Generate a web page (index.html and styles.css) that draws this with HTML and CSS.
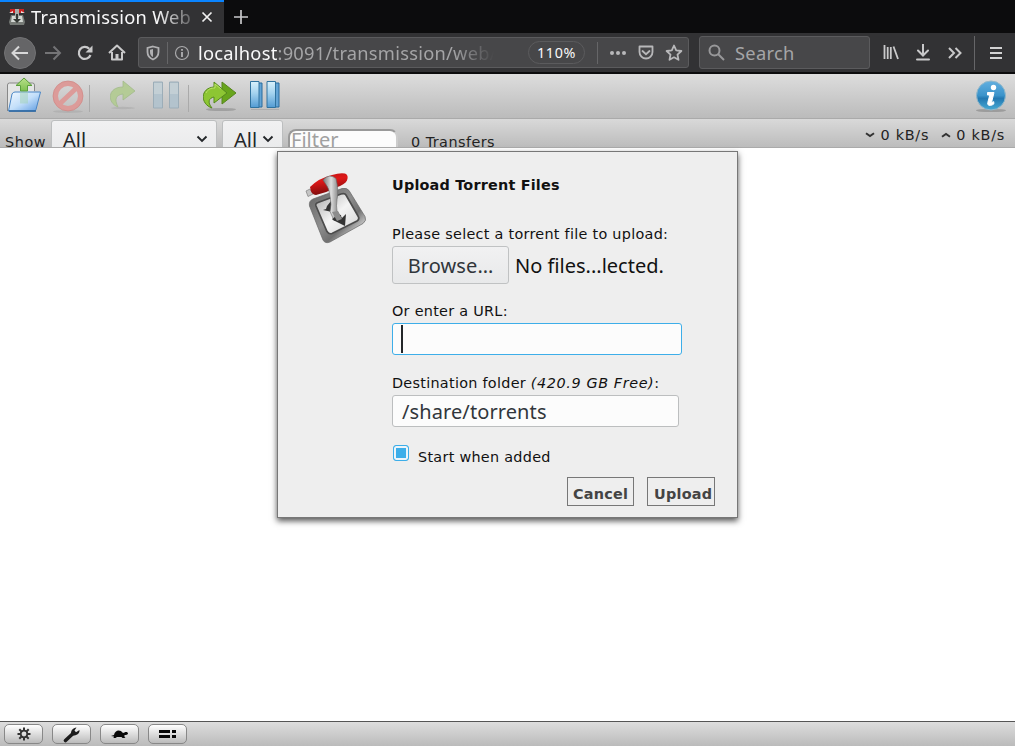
FILE: index.html
```html
<!DOCTYPE html>
<html lang="en">
<head>
<meta charset="utf-8">
<title>Transmission Web Interface</title>
<link rel="stylesheet" href="styles.css">
</head>
<body>
<div class="browser">
  <div class="tabs">
    <div class="tab">
      <svg class="favicon" width="16" height="16" viewBox="0 0 16 16"><path d="M2 6h12l2 7-1 3H1l-1-3z" fill="#777b77"/><path d="M3 7h10l1 6H2z" fill="#d4d8d4"/><path d="M1 0h14v4H1z" fill="#c92222"/><path d="M0 4l4-2v2zM16 4l-4-2v2z" fill="#efe4e0"/><path d="M6 0h4v9H6z" fill="#a9aca9"/><path d="M7 5h2v5h3l-4 4-4-4h3z" fill="#343834"/></svg>
      <span class="tab-title">Transmission Web</span>
      <svg class="tab-close" width="12" height="12" viewBox="0 0 12 12"><path d="M1.500 1.500l9 9M10.500 1.500l-9 9" stroke="#f0f0f0" stroke-width="1.700"/></svg>
    </div>
    <svg class="plus" width="16" height="16" viewBox="0 0 16 16"><path d="M8 1v14M1 8h14" stroke="#c9c9cb" stroke-width="1.700"/></svg>
  </div>
  <div class="nav">
    <div class="back"><svg width="20" height="20" viewBox="0 0 20 20" fill="none" stroke="#d8d8d9" stroke-width="2"><path d="M18 10H3M9 3.500L2.500 10 9 16.500"/></svg></div>
    <svg class="fwd" width="18" height="18" viewBox="0 0 18 18" fill="none" stroke="#747476" stroke-width="2"><path d="M1 9h15M9.500 2.500L16 9l-6.500 6.500"/></svg>
    <svg class="reload" width="16" height="16" viewBox="0 0 16 16"><path d="M12.200 3.800A6 6 0 1 0 13.500 10" fill="none" stroke="#c9c9ca" stroke-width="2.200"/><path d="M15.500 0.500v7h-7z" fill="#c9c9ca"/></svg>
    <svg class="home" width="18" height="17" viewBox="0 0 18 17" fill="none" stroke="#c9c9ca" stroke-width="2"><path d="M1 9l8-7.500L17 9M4 8v7.500h10V8" stroke-linejoin="round"/><path d="M9 15v-5" stroke-width="3"/></svg>
    <div class="urlbar">
      <svg class="shield" width="14" height="16" viewBox="0 0 14 16"><path d="M7 1.500L12.500 3v4c0 3.500-2 6-5.500 7.500C3.500 13 1.500 10.500 1.500 7V3z" fill="none" stroke="#b1b1b3" stroke-width="1.800"/><path d="M7 4v8C5 11 4 9.500 4 7V4.800z" fill="#b1b1b3"/></svg>
      <i class="divider divider-shield"></i>
      <svg class="info-small" width="16" height="16" viewBox="0 0 16 16"><circle cx="8" cy="8" r="6.500" fill="none" stroke="#aaaaac" stroke-width="1.200"/><path d="M8 7v5M8 4v1.800" stroke="#b1b1b3" stroke-width="1.800"/></svg>
      <span class="url"><b>localhost</b>:9091/transmission/web/</span>
      <span class="zoom">110%</span>
      <i class="divider divider-zoom"></i>
      <svg class="dots" width="18" height="6" viewBox="0 0 18 6" fill="#b8b8ba"><circle cx="3" cy="3" r="2"/><circle cx="9" cy="3" r="2"/><circle cx="15" cy="3" r="2"/></svg>
      <svg class="pocket" width="16" height="15" viewBox="0 0 16 15" fill="none" stroke="#b8b8ba" stroke-width="1.800"><path d="M1.500 1.500h13v5.500a6.500 6.500 0 0 1-13 0z" stroke-linejoin="round"/><path d="M4.500 6L8 9.200 11.500 6" stroke-linecap="round"/></svg>
      <svg class="star" width="18" height="17" viewBox="0 0 18 17"><path d="M9 1.500l2.200 4.900 5.200.6-3.900 3.600 1 5.200L9 13.300l-4.500 2.500 1-5.200L1.600 7l5.200-.6z" fill="none" stroke="#b8b8ba" stroke-width="1.800" stroke-linejoin="round"/></svg>
    </div>
    <div class="search">
      <svg width="17" height="17" viewBox="0 0 17 17" fill="none" stroke="#98989a" stroke-width="2"><circle cx="6.500" cy="6.500" r="5"/><path d="M10 10l6 6"/></svg>
      <span>Search</span>
    </div>
    <svg class="library" width="16" height="15" viewBox="0 0 16 15" stroke="#c9c9ca" stroke-width="1.800"><path d="M1.500 0v14M4.700 2v12M7.800 2v12M10.500 1.500l4.500 12.500"/></svg>
    <svg class="download" width="14" height="17" viewBox="0 0 14 17" fill="none" stroke="#c9c9ca" stroke-width="2"><path d="M7 0v11M2 6.500l5 5 5-5M1 15.500h12" stroke-linecap="round"/></svg>
    <svg class="more" width="14" height="12" viewBox="0 0 14 12" fill="none" stroke="#c9c9ca" stroke-width="2"><path d="M1 1l5 5-5 5M7.500 1l5 5-5 5"/></svg>
    <i class="divider divider-menu"></i>
    <svg class="menu" width="12" height="12" viewBox="0 0 12 12" stroke="#d2d2d3" stroke-width="2"><path d="M0 1h12M0 6h12M0 11h12"/></svg>
  </div>
</div>
<div class="toolbar">
  <svg class="open" width="36" height="36" viewBox="0 0 36 36">
    <defs>
      <linearGradient id="folder" x1="0" y1="0" x2="1" y2="1"><stop offset="0" stop-color="#f2f9ff"/><stop offset=".5" stop-color="#c3dffa"/><stop offset="1" stop-color="#5d9ae0"/></linearGradient>
      <linearGradient id="green" x1="0" y1="0" x2="0" y2="1"><stop offset="0" stop-color="#b8e08a"/><stop offset="1" stop-color="#7fc050"/></linearGradient>
      <linearGradient id="blue" x1="0" y1="0" x2="0" y2="1"><stop offset="0" stop-color="#d9f1fc"/><stop offset=".45" stop-color="#a4d3ef"/><stop offset="1" stop-color="#529bd3"/></linearGradient>
    </defs>
    <path d="M1.500 34V8q0-2 2-2h23q2 0 2 2v6" fill="#e4e5e5" stroke="#888"/>
    <path d="M2.500 34L6 17q1-2 3-2h25.500l-4.500 17.500q-.5 1.500-2 1.500z" fill="url(#folder)" stroke="#4a86c6"/>
    <path d="M3 34h27" stroke="#27629d" stroke-width="1.500"/>
    <path d="M18 1l8 7.500h-4.500V14h-7V8.500H10z" fill="url(#green)" stroke="#5b9f3c"/>
    <path d="M14 14.500h8v12h-8z" fill="#9fd0b4" opacity=".5"/>
  </svg>
  <svg class="stop" width="32" height="34" viewBox="0 0 32 34"><ellipse cx="16" cy="31.500" rx="15" ry="1.500" fill="#999" opacity=".35"/><circle cx="16" cy="16" r="12.500" fill="none" stroke="#dc9b99" stroke-width="5"/><circle cx="16" cy="16" r="15" fill="none" stroke="#cf8583" stroke-width=".7"/><path d="M7 24.500L25 7.500" stroke="#dc9b99" stroke-width="5"/></svg>
  <i class="separator sep-one"></i>
  <svg class="start" width="28" height="30" viewBox="0 0 28 30"><ellipse cx="13" cy="28" rx="12" ry="1.200" fill="#777" opacity=".2"/><path d="M8 27C-3 23-3 7 13 7V1l12 10-12 9v-6c-7 1-9 5-5 13z" fill="#b4cb96" stroke="#a2ba8c" stroke-width=".8"/></svg>
  <svg class="pause-dim" width="28" height="29" viewBox="0 0 28 29"><path d="M1.500 1h9v26h-9zM17.500 1h9v26h-9z" fill="#b3c3cd" stroke="#9cadb8"/><path d="M2 2h8v11H2zM18 2h8v11h-8z" fill="#c3cfd5"/></svg>
  <i class="separator sep-two"></i>
  <svg class="start-all" width="36" height="32" viewBox="0 0 36 32"><ellipse cx="18" cy="29.500" rx="15" ry="1.600" fill="#555" opacity=".3"/><path d="M19 2l14 11-14 11z" fill="#68a51c" stroke="#56851f"/><path d="M9 28C-3 24-3 8 11 7V2l13 11-13 10v-6c-5 1-7 5-2 11z" fill="#8dc633" stroke="#55881d"/><path d="M3 13c2-4 5-5 9-5V4l6 5" stroke="#bbe16a" fill="none"/></svg>
  <svg class="pause-all" width="32" height="31" viewBox="0 0 32 31"><path d="M5 3h8v24H5zM21 3h9v24h-9z" fill="#63a4d5" stroke="#286c9f"/><path d="M1.500 1.500h8.500v26H1.500zM18 1.500h8.500v26H18z" fill="url(#blue)" stroke="#30739f"/><path d="M2 29.500h28" stroke="#888" opacity=".35"/></svg>
  <svg class="info" width="32" height="33" viewBox="0 0 32 33">
    <defs><linearGradient id="info-fill" x1="0" y1="0" x2="0" y2="1"><stop offset="0" stop-color="#62afe0"/><stop offset=".5" stop-color="#3b93ca"/><stop offset=".6" stop-color="#2379b2"/><stop offset="1" stop-color="#48aad4"/></linearGradient></defs>
    <ellipse cx="16" cy="30.500" rx="15" ry="1.600" fill="#777" opacity=".5"/><circle cx="16" cy="15.500" r="14.500" fill="url(#info-fill)" stroke="#92b8ca"/><circle cx="18.500" cy="7.500" r="2.700" fill="white"/><path d="M12.500 12.500h6.500l-2.500 10 2.300-.8v2.300c-3 2.200-7 2-6-1.500l2-7.500h-2.300z" fill="white" stroke="white"/>
  </svg>
</div>
<div class="statusbar">
  <span class="show">Show</span>
  <div class="select select-state"><span>All</span><svg width="12" height="8" viewBox="0 0 12 8"><path d="M1.500 1.500L6 6l4.500-4.500" fill="none" stroke="#232629" stroke-width="1.900"/></svg></div>
  <div class="select select-tracker"><span>All</span><svg width="12" height="8" viewBox="0 0 12 8"><path d="M1.500 1.500L6 6l4.500-4.500" fill="none" stroke="#232629" stroke-width="1.900"/></svg></div>
  <div class="filter"><span>Filter</span></div>
  <span class="count">0 Transfers</span>
  <div class="speed">
    <svg width="10" height="6" viewBox="0 0 10 6"><path d="M1 1.200l4 2.800 4-2.800" fill="none" stroke="#333" stroke-width="2"/></svg><span class="down-speed">0 kB/s</span>
    <svg width="10" height="6" viewBox="0 0 10 6"><path d="M1 4.800L5 2l4 2.800" fill="none" stroke="#333" stroke-width="2"/></svg><span>0 kB/s</span>
  </div>
</div>
<div class="torrents"></div>
<div class="footer">
  <button><svg width="16" height="14" viewBox="0 0 16 14"><circle cx="8" cy="7" r="3.300" fill="none" stroke="#333" stroke-width="1.800"/><path d="M8 .5v3M8 10.500v3M1.500 7h3M11.500 7h3M3.300 2.300l2.200 2.200M10.500 9.500l2.200 2.200M3.300 11.700l2.200-2.200M10.500 4.500l2.200-2.200" stroke="#333" stroke-width="2"/></svg></button>
  <button><svg width="18" height="17" viewBox="0 0 18 17"><path d="M2.500 14.500l7-6.500" stroke="#1c1c1c" stroke-width="3.600" stroke-linecap="round"/><path d="M8 8c0-4 2-6 5.500-6.500l-2 3 1.500 1.800L16.500 4c.3 4-3 5.500-6.500 5.500z" fill="#1c1c1c"/></svg></button>
  <button><svg width="18" height="10" viewBox="0 0 18 10"><path d="M0 7l3-1c1-5 6-6 9-2l1.500-.5c2-1 3.500 0 3.500 1S15 6 13.500 6v2l1 1h-3l-1-1H6L4.500 9H2.500L3 7.500z" fill="#080808"/></svg></button>
  <button><svg width="18" height="10" viewBox="0 0 18 10"><path d="M0 1h11v3H0zM13 1h4v3h-4zM0 6h11v3H0zM13 6h4v3h-4z" fill="#080808"/></svg></button>
</div>
<div class="dialog">
  <svg class="logo" width="64" height="74" viewBox="0 0 64 74">
    <defs>
      <linearGradient id="frame" x1="0" y1="0" x2="1" y2="1"><stop offset="0" stop-color="#626262"/><stop offset=".45" stop-color="#8e8e8e"/><stop offset=".65" stop-color="#707070"/><stop offset=".8" stop-color="#c0c0c0"/><stop offset="1" stop-color="#777"/></linearGradient>
      <linearGradient id="plate" x1="0" y1="0" x2="1" y2="1"><stop offset="0" stop-color="#aaa"/><stop offset=".5" stop-color="#f4f4f4"/><stop offset="1" stop-color="#d3d3d3"/></linearGradient>
      <linearGradient id="metal" x1="0" y1="0" x2="1" y2="0"><stop offset="0" stop-color="#777"/><stop offset=".45" stop-color="#ddd"/><stop offset="1" stop-color="#666"/></linearGradient>
      <linearGradient id="handle" x1="0" y1="0" x2=".25" y2="1"><stop offset="0" stop-color="#b51515"/><stop offset=".4" stop-color="#e01818"/><stop offset="1" stop-color="#7d0c0c"/></linearGradient>
    </defs>
    <path d="M8 27L37 16.500q5-1 7 2l16 26q2 4-2 7L25 70q-5 2-7-2L4.500 34q-1-5 3.500-7z" fill="url(#frame)" stroke="#666" stroke-width=".7"/>
    <path d="M13 30.500l23-8.500q4-1 5 1l12 21q2 3-1 5L27 61.500q-3 1-5-2L11 34q-1-2.500 2-3.500z" fill="url(#plate)" stroke="#4c4c4c" stroke-width="1.700"/>
    <path d="M26 29l-4 5-1 3-3 1 9 2v-11z" fill="#333"/>
    <path d="M1 19l4-2 3 5-5 2.500z" fill="#c4c4c4" stroke="#888" stroke-width=".8"/>
    <path d="M5 15Q14 6 27 3q8-2.500 13-1.500 4 1.500 2 7-2 4-11 7-9 5-20 7.500-5 0-6-8z" fill="url(#handle)"/>
    <path d="M18 8q6-7 13-1.500 3 13 1 21-1 7 0 11l4 7-7 3-4-9q2-7 0-15-1-9-4-12z" fill="url(#metal)" stroke="#666" stroke-width=".6"/>
    <path d="M27 47q3-1 4-5l5 1q0 2 1 3l4-4-1 12-12-6z" fill="#333"/>
    <path d="M27 40l6-1 4 8-5 2z" fill="#8d8d8d"/>
  </svg>
  <div class="form">
    <h2>Upload Torrent Files</h2>
    <label class="select-label">Please select a torrent file to upload:</label>
    <div class="file"><span class="browse">Browse…</span><span class="file-name">No files...lected.</span></div>
    <label class="url-label">Or enter a URL:</label>
    <div class="field focused"><i class="caret"></i></div>
    <label class="dest-label">Destination folder <em>(420.9 GB Free)</em>:</label>
    <div class="field destination">/share/torrents</div>
    <div class="auto-start"><i class="checkbox"></i><span>Start when added</span></div>
    <div class="actions"><span class="cancel">Cancel</span><span class="upload">Upload</span></div>
  </div>
</div>
</body>
</html>
```
FILE: styles.css
```css
* { box-sizing: border-box; }
body {
  margin: 0; width: 1015px; height: 746px; overflow: hidden; position: relative;
  display: flex; flex-direction: column; background: #fff; color: #222;
  font-family: "DejaVu Sans", sans-serif; font-size: 14.4px; letter-spacing: .28px;
}
svg { display: block; flex: none; }
i { display: block; flex: none; }
span, label { white-space: nowrap; }

.browser { height: 74px; flex: none; background: #323234; font-family: "Noto Sans", sans-serif; letter-spacing: 0; border-bottom: 2px solid #0c0c0d; }
.tabs { height: 33px; background: #0c0c0d; display: flex; align-items: center; }
.tab { width: 224px; height: 33px; background: #323234; border-top: 2px solid #0a84ff; display: flex; align-items: center; padding: 0 0 1px 9px; }
.tab-title { width: 162px; margin-left: 6px; overflow: hidden; font-size: 18.3px; letter-spacing: .25px; line-height: 28px; color: #f9f9fa; -webkit-mask-image: linear-gradient(90deg, #000 126px, transparent 172px); mask-image: linear-gradient(90deg, #000 126px, transparent 172px); }
.tab-close { margin-left: 8px; }
.plus { margin-left: 9px; }
.nav { height: 39px; display: flex; align-items: center; }
.back { width: 32px; height: 32px; margin-left: 4px; border-radius: 50%; background: #656567; border: 1px solid #737375; display: flex; align-items: center; justify-content: center; }
.fwd { margin-left: 8px; }
.reload { margin-left: 15px; }
.home { margin-left: 15px; }
.urlbar { width: 551px; height: 31px; margin-left: 12px; background: #474749; border: 1px solid #5b5b5d; border-radius: 3px; display: flex; align-items: center; }
.shield { margin-left: 7px; }
.divider { width: 1px; height: 22px; background: #666668; }
.divider-shield { margin-left: 7px; }
.info-small { margin-left: 6px; }
.url { width: 296px; margin-left: 8px; overflow: hidden; color: #a5a5a7; font-size: 18.3px; letter-spacing: .25px; line-height: 28px; -webkit-mask-image: linear-gradient(90deg, #000 255px, transparent 296px); mask-image: linear-gradient(90deg, #000 255px, transparent 296px); }
.url b { font-weight: 400; color: #f9f9fa; }
.zoom { width: 57px; height: 23px; margin-left: 34px; border: 1px solid #5b5b5d; border-radius: 12px; text-align: center; font-size: 14.3px; letter-spacing: .7px; line-height: 22px; color: #f9f9fa; }
.divider-zoom { margin-left: 12px; }
.dots { margin-left: 11px; }
.pocket { margin-left: 11px; }
.star { margin-left: 11px; }
.search { width: 171px; height: 33px; margin-left: 10px; background: #474749; border: 1px solid #5b5b5d; border-radius: 3px; display: flex; align-items: center; padding-left: 8px; font-size: 18.3px; letter-spacing: .3px; color: #a5a5a7; }
.search span { margin-left: 10px; }
.library { margin-left: 13px; }
.download { margin-left: 17px; }
.more { margin-left: 18px; }
.divider-menu { margin-left: 12px; height: 34px; }
.menu { margin-left: 15px; }

.toolbar { height: 45px; flex: none; background: linear-gradient(#ddd, #bbb); border-bottom: 1px solid #aaa; display: flex; align-items: flex-start; }
.open { margin: 3px 0 0 6px; }
.stop { margin: 6px 0 0 10px; }
.separator { width: 1px; height: 27px; margin-top: 11px; background: #aaa; }
.sep-one { margin-left: 5px; }
.start { margin: 6px 0 0 20px; }
.pause-dim { margin: 7px 0 0 14px; }
.sep-two { margin-left: 8px; }
.start-all { margin: 6px 0 0 14px; }
.pause-all { margin: 6px 0 0 10px; }
.info { margin: 6px 8px 0 auto; }

.statusbar { height: 29px; flex: none; overflow: hidden; background: linear-gradient(#d9d9d9, #bcbcbc); border-bottom: 1px solid #aaa; display: flex; align-items: flex-start; color: #222; }
.show { width: 46px; margin-top: 13px; padding-left: 5px; line-height: 20px; letter-spacing: .6px; }
.select { height: 38px; margin-top: 1px; border: 1px solid #bcbebf; border-radius: 3px; background: linear-gradient(#f1f1f2, #e8e9ea); display: flex; align-items: center; justify-content: space-between; font: 20px "Noto Sans", sans-serif; letter-spacing: 0; color: #232629; }
.select-state { width: 166px; margin-left: 5px; padding: 0 8px 0 11px; }
.select-tracker { width: 61px; margin-left: 5px; padding: 0 8px 0 11px; }
.filter { width: 110px; height: 30px; margin: 10px 0 0 5px; border: 2px solid #9b9b9b; border-color: #999 #ccc #ccc #999; border-radius: 8px; background: #fcfcfc; font: 20px/18px "Noto Sans", sans-serif; letter-spacing: 0; color: #a0a0a0; padding-left: 1px; }
.count { margin: 13px 0 0 13px; line-height: 20px; letter-spacing: .45px; }
.speed { margin: 6px 10px 0 auto; display: flex; align-items: center; line-height: 20px; letter-spacing: .75px; }
.speed span { margin-left: 5px; }
.speed .down-speed { margin-right: 12px; }
.torrents { flex: 1; background: #fff; }
.footer { height: 25px; flex: none; border-top: 1px solid #555; background: linear-gradient(#ddd, #bbb); display: flex; gap: 9px; padding: 2px 0 0 4px; }
.footer button { width: 39px; height: 20px; padding: 0; border: 1px solid #888; border-radius: 5px; background: linear-gradient(#fff, #bbb); display: flex; align-items: center; justify-content: center; }

.dialog { position: absolute; left: 277px; top: 151px; width: 461px; height: 367px; background: #eee; border: 1px solid #777; box-shadow: 0 3px 6px #555; display: flex; align-items: flex-start; color: #111; }
.logo { margin: 20px 0 0 27px; }
.form { width: 323px; margin-left: 23px; padding-top: 23px; display: flex; flex-direction: column; }
h2 { margin: 0; font-size: 14.4px; letter-spacing: .2px; line-height: 20px; white-space: nowrap; }
.form label { line-height: 20px; }
.form em { letter-spacing: .6px; }
.select-label { margin-top: 29px; }
.file { height: 38px; margin-top: 2px; display: flex; align-items: center; font: 20px "Noto Sans", sans-serif; letter-spacing: 0; }
.browse { width: 117px; height: 38px; border: 1px solid #c0c2c3; border-radius: 3px; background: linear-gradient(#f1f1f2, #e8e9ea); text-align: center; line-height: 38px; letter-spacing: .1px; color: #31363b; }
.file-name { margin-left: 6px; }
.url-label { margin-top: 17px; }
.field { width: 287px; height: 32px; border: 1px solid #bcbebf; border-radius: 3px; background: #fcfcfc; padding: 0 9px; font: 20px/31px "Noto Sans", sans-serif; letter-spacing: .1px; color: #31363b; }
.focused { width: 290px; margin-top: 2px; padding: 2px 8px; border-color: #3daee9; }
.caret { width: 2px; height: 28px; margin-top: -1px; background: #232629; }
.dest-label { margin-top: 18px; }
.destination { margin-top: 2px; }
.auto-start { margin-top: 18px; display: flex; align-items: flex-start; }
.checkbox { width: 16px; height: 16px; margin-left: 1px; border: 1px solid #3daee9; border-radius: 3px; background: #3daee9; box-shadow: inset 0 0 0 2px #eef5fa; }
.auto-start span { margin: 2px 0 0 9px; line-height: 20px; }
.actions { margin-top: 10px; display: flex; justify-content: flex-end; gap: 13px; font-weight: 700; letter-spacing: .25px; color: #444; }
.actions span { height: 29px; border: 1px solid #777; line-height: 32px; }
.cancel { width: 67px; padding-left: 5px; }
.upload { width: 68px; padding-left: 6px; }
```
